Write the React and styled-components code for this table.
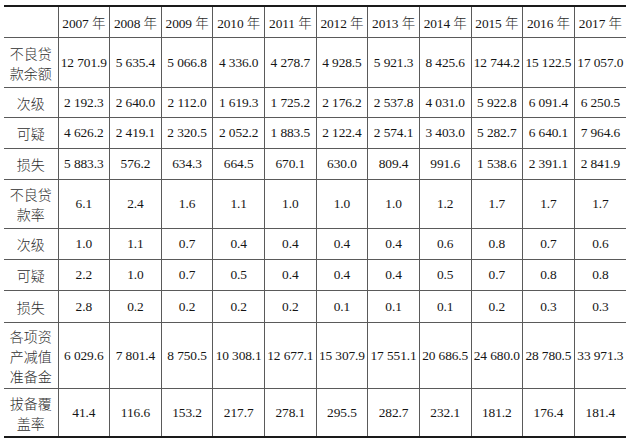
import React from "react";
import styled, { createGlobalStyle } from "styled-components";

const GlobalStyle = createGlobalStyle`
  body {
    margin: 0;
    background: #ffffff;
  }
`;

const Page = styled.div`
  padding: 5px 11px 0 4px;
  background: #ffffff;
`;

const Table = styled.table`
  width: 622px;
  border-collapse: collapse;
  table-layout: fixed;
  border-top: 2px solid #1a1a1a;
  border-bottom: 2px solid #1a1a1a;
  font-family: "Liberation Serif", "Times New Roman", "Noto Sans CJK SC", serif;
  font-size: 13.4px;
  color: #151515;
`;

const Cell = styled.td`
  height: ${(p) => p.h}px;
  padding: 0;
  text-align: center;
  vertical-align: middle;
  border: 1px solid #5a5a5a;
  white-space: nowrap;
  letter-spacing: -0.1px;
  &:first-child {
    border-left: none;
  }
  &:last-child {
    border-right: none;
  }
`;

const Label = styled(Cell)`
  font-family: "Noto Sans CJK SC", sans-serif;
  font-size: 14px;
  font-weight: 300;
  line-height: 20px;
  letter-spacing: 0;
  color: #2e2e2e;
`;

const Year = styled.span`
  font-family: "Noto Sans CJK SC", sans-serif;
  font-size: 13.5px;
  font-weight: 300;
  color: #2a2a2a;
`;

const years = [2007, 2008, 2009, 2010, 2011, 2012, 2013, 2014, 2015, 2016, 2017];

const rows = [
  { label: ["不良贷", "款余额"], h: 49, values: ["12 701.9", "5 635.4", "5 066.8", "4 336.0", "4 278.7", "4 928.5", "5 921.3", "8 425.6", "12 744.2", "15 122.5", "17 057.0"] },
  { label: ["次级"], h: 29, values: ["2 192.3", "2 640.0", "2 112.0", "1 619.3", "1 725.2", "2 176.2", "2 537.8", "4 031.0", "5 922.8", "6 091.4", "6 250.5"] },
  { label: ["可疑"], h: 30, values: ["4 626.2", "2 419.1", "2 320.5", "2 052.2", "1 883.5", "2 122.4", "2 574.1", "3 403.0", "5 282.7", "6 640.1", "7 964.6"] },
  { label: ["损失"], h: 30, values: ["5 883.3", "576.2", "634.3", "664.5", "670.1", "630.0", "809.4", "991.6", "1 538.6", "2 391.1", "2 841.9"] },
  { label: ["不良贷", "款率"], h: 48, values: ["6.1", "2.4", "1.6", "1.1", "1.0", "1.0", "1.0", "1.2", "1.7", "1.7", "1.7"] },
  { label: ["次级"], h: 30, values: ["1.0", "1.1", "0.7", "0.4", "0.4", "0.4", "0.4", "0.6", "0.8", "0.7", "0.6"] },
  { label: ["可疑"], h: 30, values: ["2.2", "1.0", "0.7", "0.5", "0.4", "0.4", "0.4", "0.5", "0.7", "0.8", "0.8"] },
  { label: ["损失"], h: 31, values: ["2.8", "0.2", "0.2", "0.2", "0.2", "0.1", "0.1", "0.1", "0.2", "0.3", "0.3"] },
  { label: ["各项资", "产减值", "准备金"], h: 65, values: ["6 029.6", "7 801.4", "8 750.5", "10 308.1", "12 677.1", "15 307.9", "17 551.1", "20 686.5", "24 680.0", "28 780.5", "33 971.3"] },
  { label: ["拔备覆", "盖率"], h: 47, values: ["41.4", "116.6", "153.2", "217.7", "278.1", "295.5", "282.7", "232.1", "181.2", "176.4", "181.4"] },
];

function App() {
  return (
    <>
      <GlobalStyle />
      <Page>
        <Table>
          <colgroup>
            <col style={{ width: 54 }} />
            {years.map((y) => (
              <col key={y} />
            ))}
          </colgroup>
          <tbody>
            <tr>
              <Cell h={30} />
              {years.map((y) => (
                <Cell h={30} key={y}>
                  {y} <Year>年</Year>
                </Cell>
              ))}
            </tr>
            {rows.map((r, i) => (
              <tr key={i}>
                <Label h={r.h}>
                  {r.label.map((t, j) => (
                    <div key={j}>{t}</div>
                  ))}
                </Label>
                {r.values.map((v, j) => (
                  <Cell h={r.h} key={j}>
                    {v}
                  </Cell>
                ))}
              </tr>
            ))}
          </tbody>
        </Table>
      </Page>
    </>
  );
}

export default App;
